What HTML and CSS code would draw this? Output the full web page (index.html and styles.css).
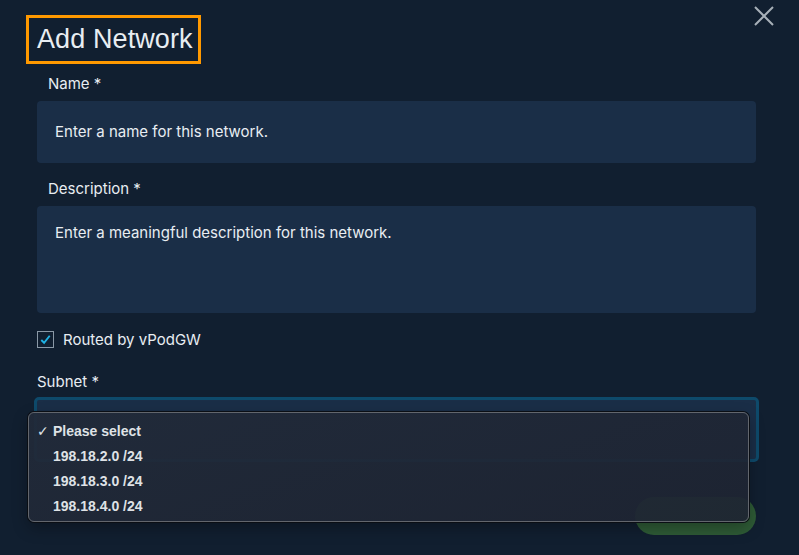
FILE: index.html
```html
<!DOCTYPE html>
<html lang="en">
<head>
  <meta charset="UTF-8" />
  <meta name="viewport" content="width=device-width, initial-scale=1.0"/>
  <title>Add Network</title>
  <link rel="stylesheet" href="styles.css">
</head>
<body>
  <div class="modal">
    <button class="close" aria-label="Close">
      <svg viewBox="0 0 20 20" width="20" height="20">
        <path d="M1 1 L19 19 M19 1 L1 19" stroke="#a7b0b8" stroke-width="2" fill="none"/>
      </svg>
    </button>

    <h1 class="title">Add Network</h1>

    <label class="label indent">Name *</label>
    <div class="input">Enter a name for this network.</div>

    <label class="label indent spaced">Description *</label>
    <div class="input textarea">Enter a meaningful description for this network.</div>

    <div class="check-row">
      <span class="checkbox">
        <svg viewBox="0 0 16 16" width="15" height="15">
          <path d="M3.5 8.5 L6.5 11.5 L12.5 4" stroke="#1fb1e3" stroke-width="2" fill="none"/>
        </svg>
      </span>
      <span>Routed by vPodGW</span>
    </div>

    <label class="label subnet">Subnet *</label>
    <div class="select-wrap">
      <div class="select"></div>
      <ul class="menu">
        <li class="selected"><span class="tick">✓</span>Please select</li>
        <li>198.18.2.0 /24</li>
        <li>198.18.3.0 /24</li>
        <li>198.18.4.0 /24</li>
      </ul>
    </div>

    <div class="actions">
      <button class="btn-save"></button>
    </div>
  </div>
</body>
</html>
```

FILE: styles.css
```css
:root {
  --bg: #111f30;
  --field: #1a2e47;
  --text: #e8edf2;
  --accent: #ff9900;
  --focus: #0e4a6b;
  --green: #2e5b36;
}

body {
  margin: 0;
  height: 555px;
  overflow: hidden;
  background-color: var(--bg);
  color: var(--text);
  font-family: Inter, "Liberation Sans", Arial, sans-serif;
  font-size: 15px;
}

.modal {
  position: relative;
  padding: 15px 43px 0 37px;
}

.close {
  position: absolute;
  top: 6px;
  right: 25px;
  width: 20px;
  height: 20px;
  padding: 0;
  border: none;
  background: transparent;
  cursor: pointer;
}

.close svg {
  display: block;
}

.title {
  display: inline-block;
  margin: 0 0 0 -11px;
  padding: 0 5px 0 8px;
  border: 3px solid var(--accent);
  font-family: "Liberation Sans", Arial, sans-serif;
  font-size: 27px;
  font-weight: normal;
  line-height: 43px;
  letter-spacing: 0.1px;
}

.label {
  display: block;
  margin-top: 10px;
  margin-bottom: 7px;
  line-height: 20px;
}

.indent {
  padding-left: 11px;
}

.spaced {
  margin-top: 16px;
}

.input {
  height: 62px;
  box-sizing: border-box;
  padding: 21px 18px;
  line-height: 20px;
  background-color: var(--field);
  border-radius: 4px;
}

.textarea {
  height: 107px;
  padding-top: 17px;
}

.check-row {
  display: flex;
  align-items: center;
  gap: 9px;
  margin-top: 18px;
  height: 17px;
}

.checkbox {
  width: 15px;
  height: 15px;
  border: 1px solid #8a98a6;
  display: flex;
  align-items: center;
  justify-content: center;
}

.subnet {
  margin-top: 24px;
  margin-bottom: 5px;
}

.select-wrap {
  position: relative;
  margin: 0 -3px;
}

.select {
  height: 65px;
  box-sizing: border-box;
  border: 3px solid var(--focus);
  border-radius: 5px;
  background-color: var(--field);
}

.menu {
  position: absolute;
  top: 15px;
  left: -6px;
  width: 721px;
  height: 110px;
  box-sizing: border-box;
  margin: 0;
  padding: 6px 0 0 24px;
  list-style: none;
  background: linear-gradient(160deg, rgba(33, 42, 57, 0.95), rgba(30, 36, 50, 0.92));
  border: 1px solid #62666d;
  border-radius: 6px;
  box-shadow: 0 0 0 1px #0a0e14, 0 6px 16px rgba(0, 0, 0, 0.3);
  color: #dfe2e6;
  font-family: "Liberation Sans", Arial, sans-serif;
  font-size: 14px;
  font-weight: bold;
}

.menu li {
  position: relative;
  line-height: 25px;
}

.tick {
  position: absolute;
  left: -16px;
  font-weight: normal;
  font-family: "DejaVu Sans", sans-serif;
  font-size: 14px;
}

.actions {
  display: flex;
  justify-content: flex-end;
  margin-top: 35px;
}

.btn-save {
  width: 121px;
  height: 38px;
  border: none;
  border-radius: 19px;
  background-color: var(--green);
}
```
